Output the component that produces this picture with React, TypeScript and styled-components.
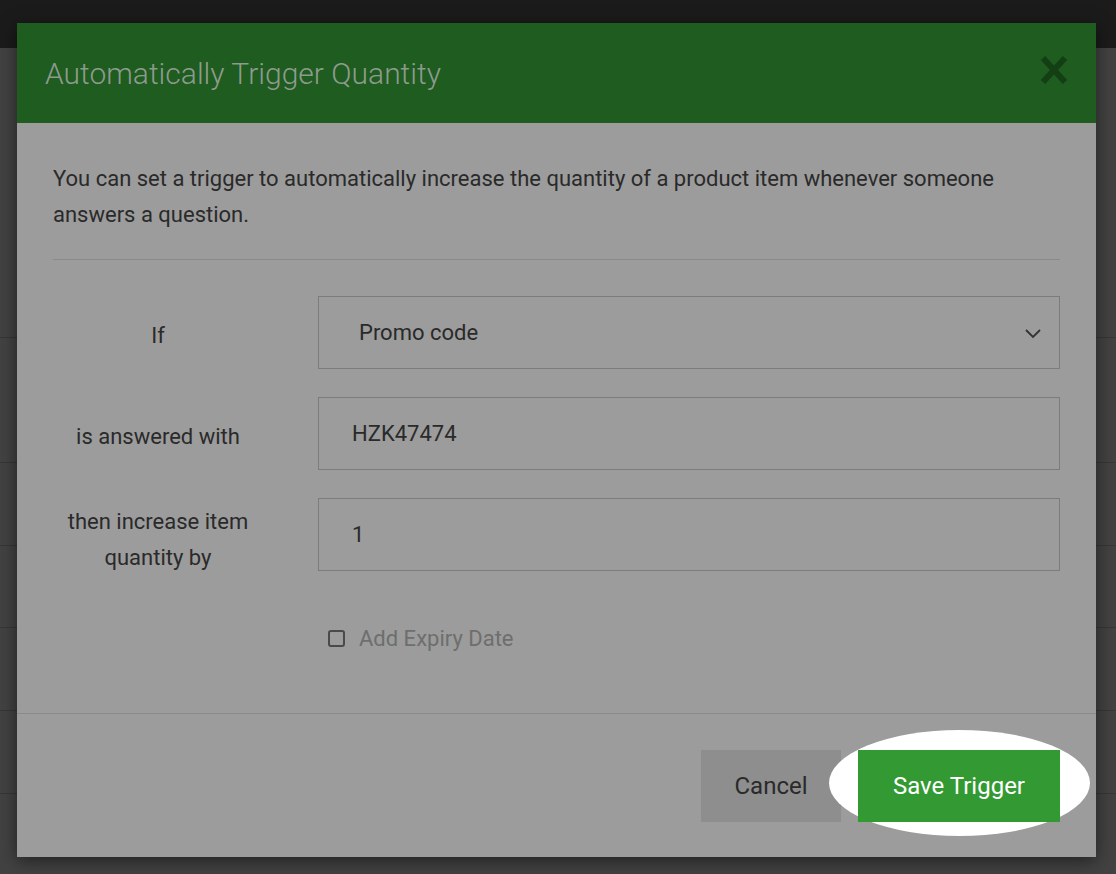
import React from "react";
import styled, { createGlobalStyle } from "styled-components";

const GlobalStyle = createGlobalStyle`
  html, body { margin: 0; padding: 0; }
  body { font-family: Roboto, "Liberation Sans", sans-serif; background: #424242; }
`;

const rowTops = [337, 462, 545, 627, 710, 793];

export default function App() {
  return (
    <>
      <GlobalStyle />
      <Page>
        <TopBar />
        {rowTops.map((t) => (
          <BgLine key={t} style={{ top: t }} />
        ))}
        <Modal>
          <Header>
            <Title>Automatically Trigger Quantity</Title>
            <Close>
              <svg width="32" height="32" viewBox="0 0 32 32">
                <path d="M5 4 L27 28 M27 4 L5 28" stroke="#143f15" strokeWidth="6" />
              </svg>
            </Close>
          </Header>
          <Body>
            <Intro>
              You can set a trigger to automatically increase the quantity of a product item whenever
              someone answers a question.
            </Intro>
            <Divider />
            <Form>
              <Label>If</Label>
              <Field>
                Promo code
                <svg width="20" height="20" viewBox="0 0 20 20">
                  <path d="M3 7 L10 14 L17 7" stroke="#333" strokeWidth="1.8" fill="none" />
                </svg>
              </Field>
              <Label>is answered with</Label>
              <Field $plain>HZK47474</Field>
              <Label>
                then increase item
                <br />
                quantity by
              </Label>
              <Field $plain>1</Field>
              <span />
              <Check>
                <Box />
                Add Expiry Date
              </Check>
            </Form>
          </Body>
          <Footer>
            <Cancel>Cancel</Cancel>
            <SaveWrap>
              <Spot />
              <Save>Save Trigger</Save>
            </SaveWrap>
          </Footer>
        </Modal>
      </Page>
    </>
  );
}

const Page = styled.div`
  position: relative;
  width: 1116px;
  height: 874px;
  overflow: hidden;
  background: #424242;
`;

const TopBar = styled.div`
  height: 48px;
  background: #1b1b1b;
`;

const BgLine = styled.div`
  position: absolute;
  left: 0;
  right: 0;
  height: 1px;
  background: #363636;
`;

const Modal = styled.div`
  position: absolute;
  left: 17px;
  top: 23px;
  width: 1079px;
  height: 834px;
  background: #9c9c9c;
  box-shadow: 0 4px 16px rgba(0, 0, 0, 0.5);
  display: flex;
  flex-direction: column;
`;

const Header = styled.div`
  height: 100px;
  background: #1e5c1f;
  display: flex;
  align-items: center;
  justify-content: space-between;
  padding: 0 26px 0 28px;
`;

const Title = styled.h1`
  margin: 0;
  font-weight: 300;
  font-size: 30px;
  color: #8f9a8f;
`;

const Close = styled.div`
  display: flex;
  margin-top: -6px;
`;

const Body = styled.div`
  padding: 38px 36px 0 36px;
  flex: 1;
`;

const Intro = styled.p`
  margin: 0;
  font-size: 22px;
  line-height: 36px;
  color: #2a2a2a;
`;

const Divider = styled.div`
  height: 1px;
  background: #8a8a8a;
  margin: 26px 0 36px;
`;

const Form = styled.div`
  display: grid;
  grid-template-columns: 210px 742px;
  column-gap: 55px;
  row-gap: 28px;
`;

const Label = styled.div`
  display: flex;
  align-items: center;
  justify-content: center;
  text-align: center;
  font-size: 22px;
  line-height: 36px;
  color: #2a2a2a;
  padding-top: 6px;
`;

const Field = styled.div<{ $plain?: boolean }>`
  height: 73px;
  box-sizing: border-box;
  border: 1px solid #7c7c7c;
  background: #9c9c9c;
  display: flex;
  align-items: center;
  justify-content: space-between;
  padding: 0 16px 0 ${(p) => (p.$plain ? "33px" : "40px")};
  font-size: 22px;
  color: #2a2a2a;
`;

const Check = styled.label`
  display: flex;
  align-items: center;
  gap: 14px;
  padding: 22px 0 0 10px;
  font-size: 22px;
  color: #6e6e6e;
`;

const Box = styled.span`
  width: 17px;
  height: 17px;
  border: 2px solid #4a4a4a;
  border-radius: 3px;
  box-sizing: border-box;
`;

const Footer = styled.div`
  height: 144px;
  border-top: 1px solid #8a8a8a;
  display: flex;
  justify-content: flex-end;
  align-items: flex-start;
  gap: 17px;
  padding: 36px 36px 0 0;
  box-sizing: border-box;
`;

const Cancel = styled.div`
  width: 140px;
  height: 72px;
  background: #8e8e8e;
  display: flex;
  align-items: center;
  justify-content: center;
  font-size: 24px;
  color: #2a2a2a;
`;

const SaveWrap = styled.div`
  position: relative;
`;

const Spot = styled.div`
  position: absolute;
  left: -29px;
  top: -20px;
  width: 261px;
  height: 106px;
  border-radius: 50%;
  background: #fff;
`;

const Save = styled.div`
  position: relative;
  width: 202px;
  height: 72px;
  background: #339933;
  display: flex;
  align-items: center;
  justify-content: center;
  font-size: 24px;
  color: #fff;
`;
